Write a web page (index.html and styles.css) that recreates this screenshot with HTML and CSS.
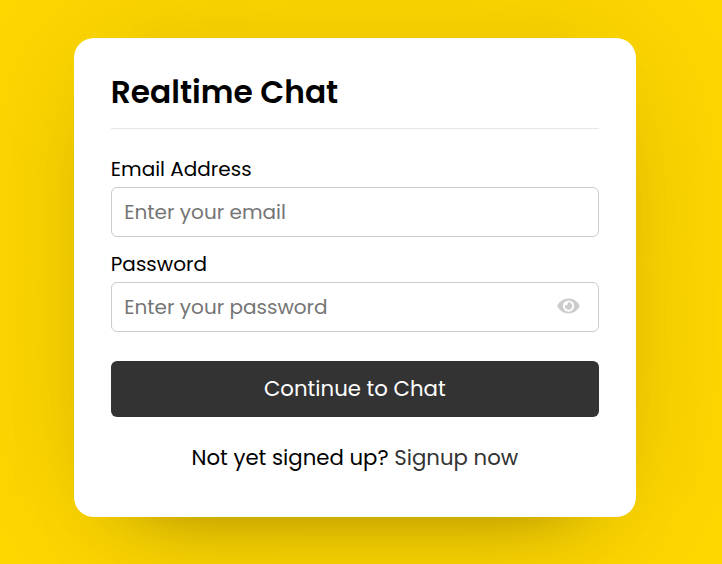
FILE: index.html
```html
<!DOCTYPE html>
<html lang="en">
<head>
<meta charset="utf-8">
<title>Realtime Chat</title>
<link rel="stylesheet" href="styles.css">
</head>
<body>
<main class="wrapper">
  <section class="form login">
    <header>Realtime Chat</header>
    <form>
      <div class="field">
        <label for="email">Email Address</label>
        <div class="control"><input id="email" type="text" placeholder="Enter your email"></div>
      </div>
      <div class="field">
        <label for="password">Password</label>
        <div class="control">
          <input id="password" type="password" placeholder="Enter your password">
          <svg class="eye" viewBox="0 0 576 512"><path d="M572.52 241.4C518.29 135.59 410.93 64 288 64S57.68 135.64 3.48 241.41a32.35 32.35 0 0 0 0 29.19C57.71 376.41 165.07 448 288 448s230.32-71.64 284.52-177.41a32.35 32.35 0 0 0 0-29.19zM288 400a144 144 0 1 1 144-144 143.93 143.93 0 0 1-144 144zm0-240a95.31 95.31 0 0 0-25.31 3.79 47.85 47.85 0 0 1-66.9 66.9A95.78 95.78 0 1 0 288 160z"/></svg>
        </div>
      </div>
      <button type="button">Continue to Chat</button>
    </form>
    <p class="link">Not yet signed up? <a href="#">Signup now</a></p>
  </section>
</main>
</body>
</html>
```
FILE: styles.css
```css
* { box-sizing: border-box; margin: 0; padding: 0; }
body {
  height: 564px;
  overflow: hidden;
  padding: 38px 0 0 73.6px;
  background: #ffd700;
  font-family: Poppins, "Open Sans", sans-serif;
}
.wrapper {
  width: 562.5px;
  height: 479px;
  background: #fff;
  border-radius: 20px;
  box-shadow: 0 0 160px rgba(0,0,0,.1), 0 40px 80px -60px rgba(0,0,0,.5);
}
.form { padding: 31px 37.2px; }
header {
  height: 60px;
  border-bottom: 1px solid #e6e6e6;
  font-size: 31.25px;
  font-weight: 600;
  line-height: 46px;
}
form { padding-top: 26px; }
.field { height: 95px; font-size: 20px; }
label { display: block; height: 32px; line-height: 28px; }
.control {
  display: flex;
  align-items: center;
  height: 50px;
  padding: 0 18px 0 12.5px;
  border: 1px solid #ccc;
  border-radius: 6px;
}
input {
  flex: 1;
  min-width: 0;
  border: 0;
  outline: 0;
  background: transparent;
  font: 20px Poppins, "Open Sans", sans-serif;
}
input::placeholder { color: #757575; }
.eye { width: 23px; height: 20px; margin-bottom: 2px; fill: #ccc; }
button {
  display: block;
  width: 100%;
  height: 56px;
  margin-top: 16px;
  padding-bottom: 1px;
  border: 0;
  border-radius: 6px;
  background: #333;
  color: #fff;
  font: 21.25px Poppins, "Open Sans", sans-serif;
}
.link { margin-top: 24px; font-size: 21.25px; line-height: 34px; text-align: center; }
a { color: #333; text-decoration: none; }
```
